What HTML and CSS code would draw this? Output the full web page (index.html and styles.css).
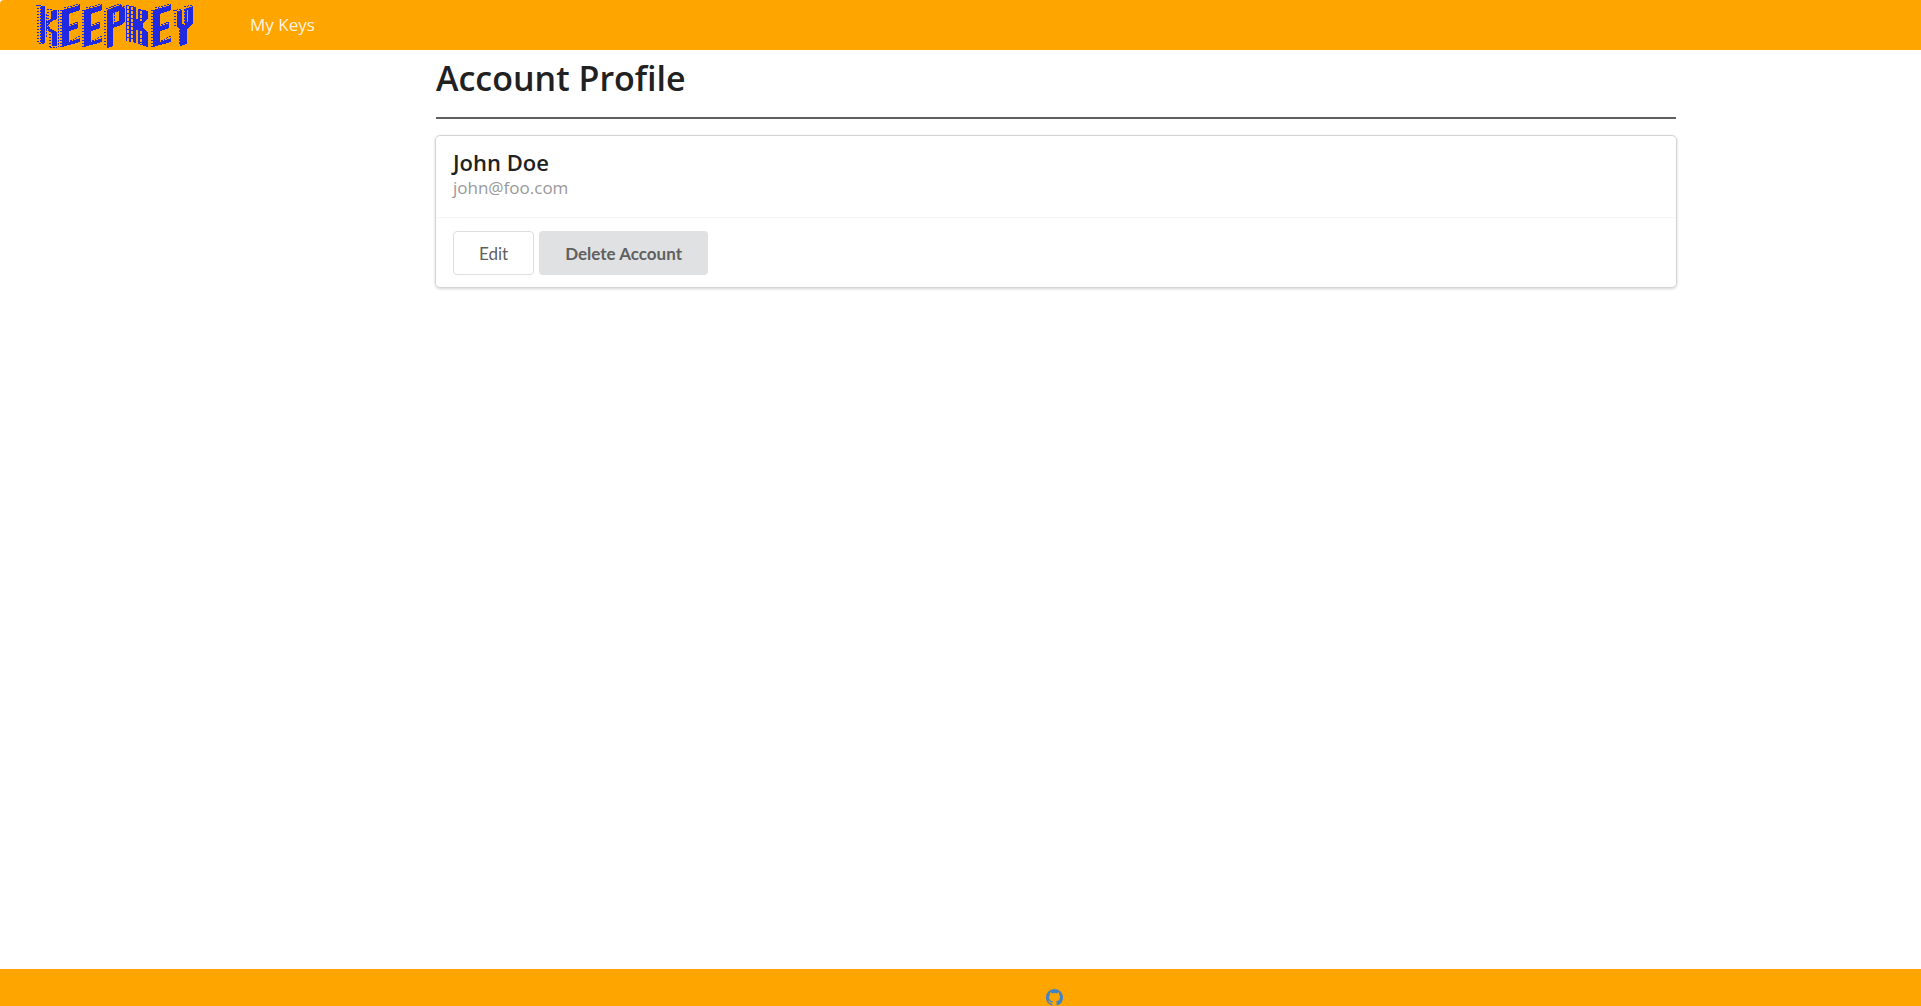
FILE: index.html
```html
<!DOCTYPE html>
<html lang="en">
<head>
<meta charset="utf-8">
<title>KeepKey</title>
<link rel="stylesheet" href="styles.css">
</head>
<body>
<nav class="navbar">
  <a class="brand" href="#" aria-label="KeepKey">
    <svg class="logo" width="160" height="48" viewBox="36 0 160 48" shape-rendering="crispEdges" aria-hidden="true">
      <defs>
        <g id="letter-e">
          <path d="M2 9L20 4V9L9 13V25L18 22V27L9 30V41L20 37V41L2 46Z"/>
          <path class="fringe" d="M1 9V46"/>
          <path class="dots" d="M4 7L20 3M10 24L18 21M10 40L20 35"/>
        </g>
      </defs>
      <path d="M41 5H45V42H41ZM51 10L57 9V18L52 20L48 24L51 28L57 31V45H52V32L46 28V21L51 18Z"/>
      <path class="gaps-thin" d="M47 19V30M50 21V28"/>
      <path class="fringe" d="M38 4V43M48 8V20M50 30V46"/>
      <path class="fringe-thin" d="M40 6V42M46 13V36M58 9V46"/>
      <path class="dots" d="M36 4H42M39 42H45M47 8L57 10M50 46H57"/>
      <use href="#letter-e" x="60"/>
      <use href="#letter-e" x="82"/>
      <path fill-rule="evenodd" d="M107 9L120 4L125 7V20L121 24L113 27V45L107 47ZM113 12V23L119 20V10Z"/>
      <path class="fringe" d="M105 10V46"/>
      <path class="fringe-thin" d="M114 12V23"/>
      <path class="dots" d="M106 8L119 3L125 6M114 22L120 19"/>
      <path d="M126 4L136 6V18H138V8L148 10V18L143 22V27L148 31V46L138 43V29H136V42L126 40Z"/>
      <path class="windows" d="M128 5V40M132 6V41M141 10V20M141 30V43"/>
      <use href="#letter-e" x="151"/>
      <path d="M177 10L182 9V23L185 24V8L193 5V22L187 28V43L180 45V29L177 26Z"/>
      <path class="slit" d="M187 9V21"/>
      <path class="fringe" d="M175 9V27"/>
      <path class="fringe-thin" d="M179 29V43M184 8V23"/>
      <path class="dots" d="M173 10L181 8M184 6L193 4"/>
    </svg>
  </a>
  <a class="nav-link" href="#">My Keys</a>
</nav>
<main class="content">
  <h1 class="title">Account Profile</h1>
  <section class="card">
    <div class="card-body">
      <h2 class="name">John Doe</h2>
      <div class="email">john@foo.com</div>
    </div>
    <div class="card-actions">
      <button class="button button-basic" type="button">Edit</button>
      <button class="button" type="button">Delete Account</button>
    </div>
  </section>
</main>
<footer class="footer">
  <a class="github" href="#" aria-label="GitHub">
    <svg width="17" height="17" viewBox="0 0 16 16" aria-hidden="true"><path d="M8 0C3.58 0 0 3.58 0 8c0 3.54 2.29 6.53 5.47 7.59.4.07.55-.17.55-.38 0-.19-.01-.82-.01-1.49-2.01.37-2.53-.49-2.69-.94-.09-.23-.48-.94-.82-1.13-.28-.15-.68-.52-.01-.53.63-.01 1.08.58 1.23.82.72 1.21 1.87.87 2.33.66.07-.52.28-.87.51-1.07-1.78-.2-3.64-.89-3.64-3.95 0-.87.31-1.59.82-2.15-.08-.2-.36-1.02.08-2.12 0 0 .67-.21 2.2.82.64-.18 1.32-.27 2-.27s1.36.09 2 .27c1.53-1.04 2.2-.82 2.2-.82.44 1.1.16 1.92.08 2.12.51.56.82 1.27.82 2.15 0 3.07-1.87 3.75-3.65 3.95.29.25.54.73.54 1.48 0 1.07-.01 1.93-.01 2.2 0 .21.15.46.55.38A8.01 8.01 0 0 0 16 8c0-4.42-3.58-8-8-8z"/></svg>
  </a>
</footer>
</body>
</html>
```
FILE: styles.css
```css
* { box-sizing: border-box; }

body {
  margin: 0;
  min-height: 100vh;
  display: flex;
  flex-direction: column;
  background: #fff;
  color: #212121;
  font-family: "Open Sans", "Noto Sans", sans-serif;
  font-size: 17px;
}

.navbar {
  display: flex;
  align-items: center;
  gap: 54px;
  height: 50px;
  padding-left: 36px;
  border-top-left-radius: 4px;
  background: #ffa500;
}

.brand, .logo { display: block; }
.logo { fill: #2029e0; stroke: none; }
.fringe { stroke: #2029e0; stroke-width: 2; stroke-dasharray: 1 2; }
.fringe-thin { stroke: #2029e0; stroke-width: 1; stroke-dasharray: 2 1; }
.dots { fill: none; stroke: #2029e0; stroke-width: 1; stroke-dasharray: 2 1; }
.windows { stroke: #ffa500; stroke-width: 2; stroke-dasharray: 3 1; }
.gaps-thin { stroke: #ffa500; stroke-width: 1; stroke-dasharray: 1 2; }
.slit { stroke: #ffa500; stroke-width: 1; }

.nav-link {
  color: rgba(255, 255, 255, 0.9);
  line-height: 24px;
  text-decoration: none;
}

.content {
  width: 100%;
  padding: 0 245px 0 436px;
}

.title {
  margin: 0 0 16px;
  padding: 4px 0 14px;
  border-bottom: 2px solid #606060;
  font-size: 34px;
  font-weight: 600;
  line-height: 49px;
}

.card {
  margin: 0 -1px;
  border: 1px solid #d4d4d5;
  border-radius: 5px;
  box-shadow: 0 1px 3px #d4d4d5;
}

.card-body {
  padding: 13px 17px 16px;
}

.name {
  margin: 0;
  font-size: 22px;
  font-weight: 600;
  line-height: 26px;
}

.email {
  color: #999;
  line-height: 26px;
}

.card-actions {
  display: flex;
  gap: 5px;
  padding: 13px 17px 12px;
  border-top: 1px solid #f5f5f5;
}

.button {
  height: 44px;
  padding: 0 26px;
  border: 0;
  border-radius: 4px;
  background: #e0e1e2;
  color: #5f5f5f;
  font: bold 17px "Lato", sans-serif;
}

.button-basic {
  padding: 0 25px;
  border: 1px solid #dededf;
  background: #fff;
  font-weight: 400;
}

.footer {
  display: flex;
  justify-content: center;
  height: 37px;
  margin-top: auto;
  padding: 19px 0 0 187px;
  background: #ffa500;
  overflow: hidden;
}

.github { fill: #4183c4; }
```
